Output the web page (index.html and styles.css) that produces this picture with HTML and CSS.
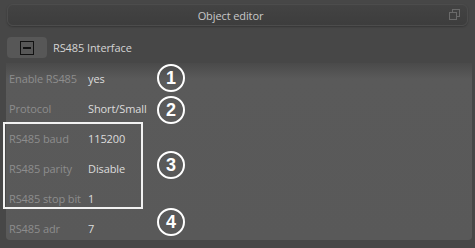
FILE: index.html
```html
<!DOCTYPE html>
<html lang="en">
<head>
    <meta charset="UTF-8">
    <title>Object editor</title>
    <link rel="stylesheet" href="styles.css">
</head>
<body>

    <div class="titlebar">
        <span class="title">Object editor</span>
        <svg class="restore" width="11" height="11" viewBox="0 0 11 11">
            <rect x="3.5" y="0.5" width="7" height="7" fill="none" stroke="#6a6a6a"/>
            <rect x="0.5" y="3.5" width="7" height="7" fill="#404040" stroke="#6a6a6a"/>
        </svg>
    </div>

    <div class="toolbar">
        <button class="collapse"><span class="minus"></span></button>
        <span class="group-name">RS485 Interface</span>
    </div>

    <div class="panel">
        <div class="row"><span class="label">Enable RS485</span><span class="value">yes</span></div>
        <div class="row"><span class="label">Protocol</span><span class="value">Short/Small</span></div>
        <div class="row"><span class="label">RS485 baud</span><span class="value">115200</span></div>
        <div class="row"><span class="label">RS485 parity</span><span class="value">Disable</span></div>
        <div class="row"><span class="label">RS485 stop bit</span><span class="value">1</span></div>
        <div class="row"><span class="label">RS485 adr</span><span class="value">7</span></div>
    </div>

    <!-- annotations drawn over the screenshot -->
    <div class="mark-box"></div>
    <div class="badge b1">1</div>
    <div class="badge b2">2</div>
    <div class="badge b3">3</div>
    <div class="badge b4">4</div>

</body>
</html>
```

FILE: styles.css
```css
body {
    margin: 0;
    width: 475px;
    height: 248px;
    background-color: #474747;
    font-family: 'Open Sans', sans-serif;
    font-size: 11px;
    letter-spacing: -0.1px;
    position: relative;
    overflow: hidden;
}

.titlebar {
    height: 22px;
    margin: 4px 7px 0 7px;
    box-sizing: border-box;
    border: 1px solid #4c4c4c;
    border-radius: 6px;
    background: linear-gradient(#434343, #3d3d3d);
    box-shadow: 0 1px 2px rgba(0, 0, 0, 0.25);
    display: flex;
    align-items: center;
    justify-content: center;
    position: relative;
}

.title {
    color: #c8c8c8;
    margin-left: -14px;
}

.restore {
    position: absolute;
    right: 7px;
    top: 4px;
}

.toolbar {
    display: flex;
    align-items: center;
    margin: 11px 0 0 7px;
    height: 21px;
}

.collapse {
    width: 40px;
    height: 21px;
    padding: 0;
    border: none;
    border-radius: 4px;
    background-color: #575757;
    display: flex;
    align-items: center;
    justify-content: center;
}

.minus {
    width: 12px;
    height: 12px;
    border: 1.5px solid #111;
    position: relative;
}

.minus::after {
    content: '';
    position: absolute;
    left: 2px;
    right: 2px;
    top: 5px;
    height: 2px;
    background-color: #111;
}

.group-name {
    color: #d4d4d4;
    margin-left: 6px;
}

.panel {
    margin: 5px 3px 0 6px;
    height: 177px;
    border-radius: 0 0 4px 4px;
    background: linear-gradient(#4a4a4a, #5a5a5a 16px, #595959);
    overflow: hidden;
}

.row {
    display: flex;
    align-items: center;
    height: 30px;
    padding-left: 3px;
    white-space: nowrap;
}

.label {
    width: 79px;
    flex-shrink: 0;
    color: #8d8d8d;
}

.value {
    color: #dcdcdc;
}

.mark-box {
    position: absolute;
    left: 3px;
    top: 122px;
    width: 136px;
    height: 83px;
    border: 2px solid #f2f2f2;
}

.badge {
    position: absolute;
    left: 157px;
    width: 24px;
    height: 24px;
    border: 2px solid #fff;
    border-radius: 50%;
    color: #fff;
    font-family: 'Liberation Sans', sans-serif;
    font-weight: bold;
    font-size: 18px;
    letter-spacing: 0;
    display: flex;
    align-items: center;
    justify-content: center;
}

.b1 { top: 64px; }
.b2 { top: 96px; }
.b3 { top: 151px; }
.b4 { top: 208px; }
```
